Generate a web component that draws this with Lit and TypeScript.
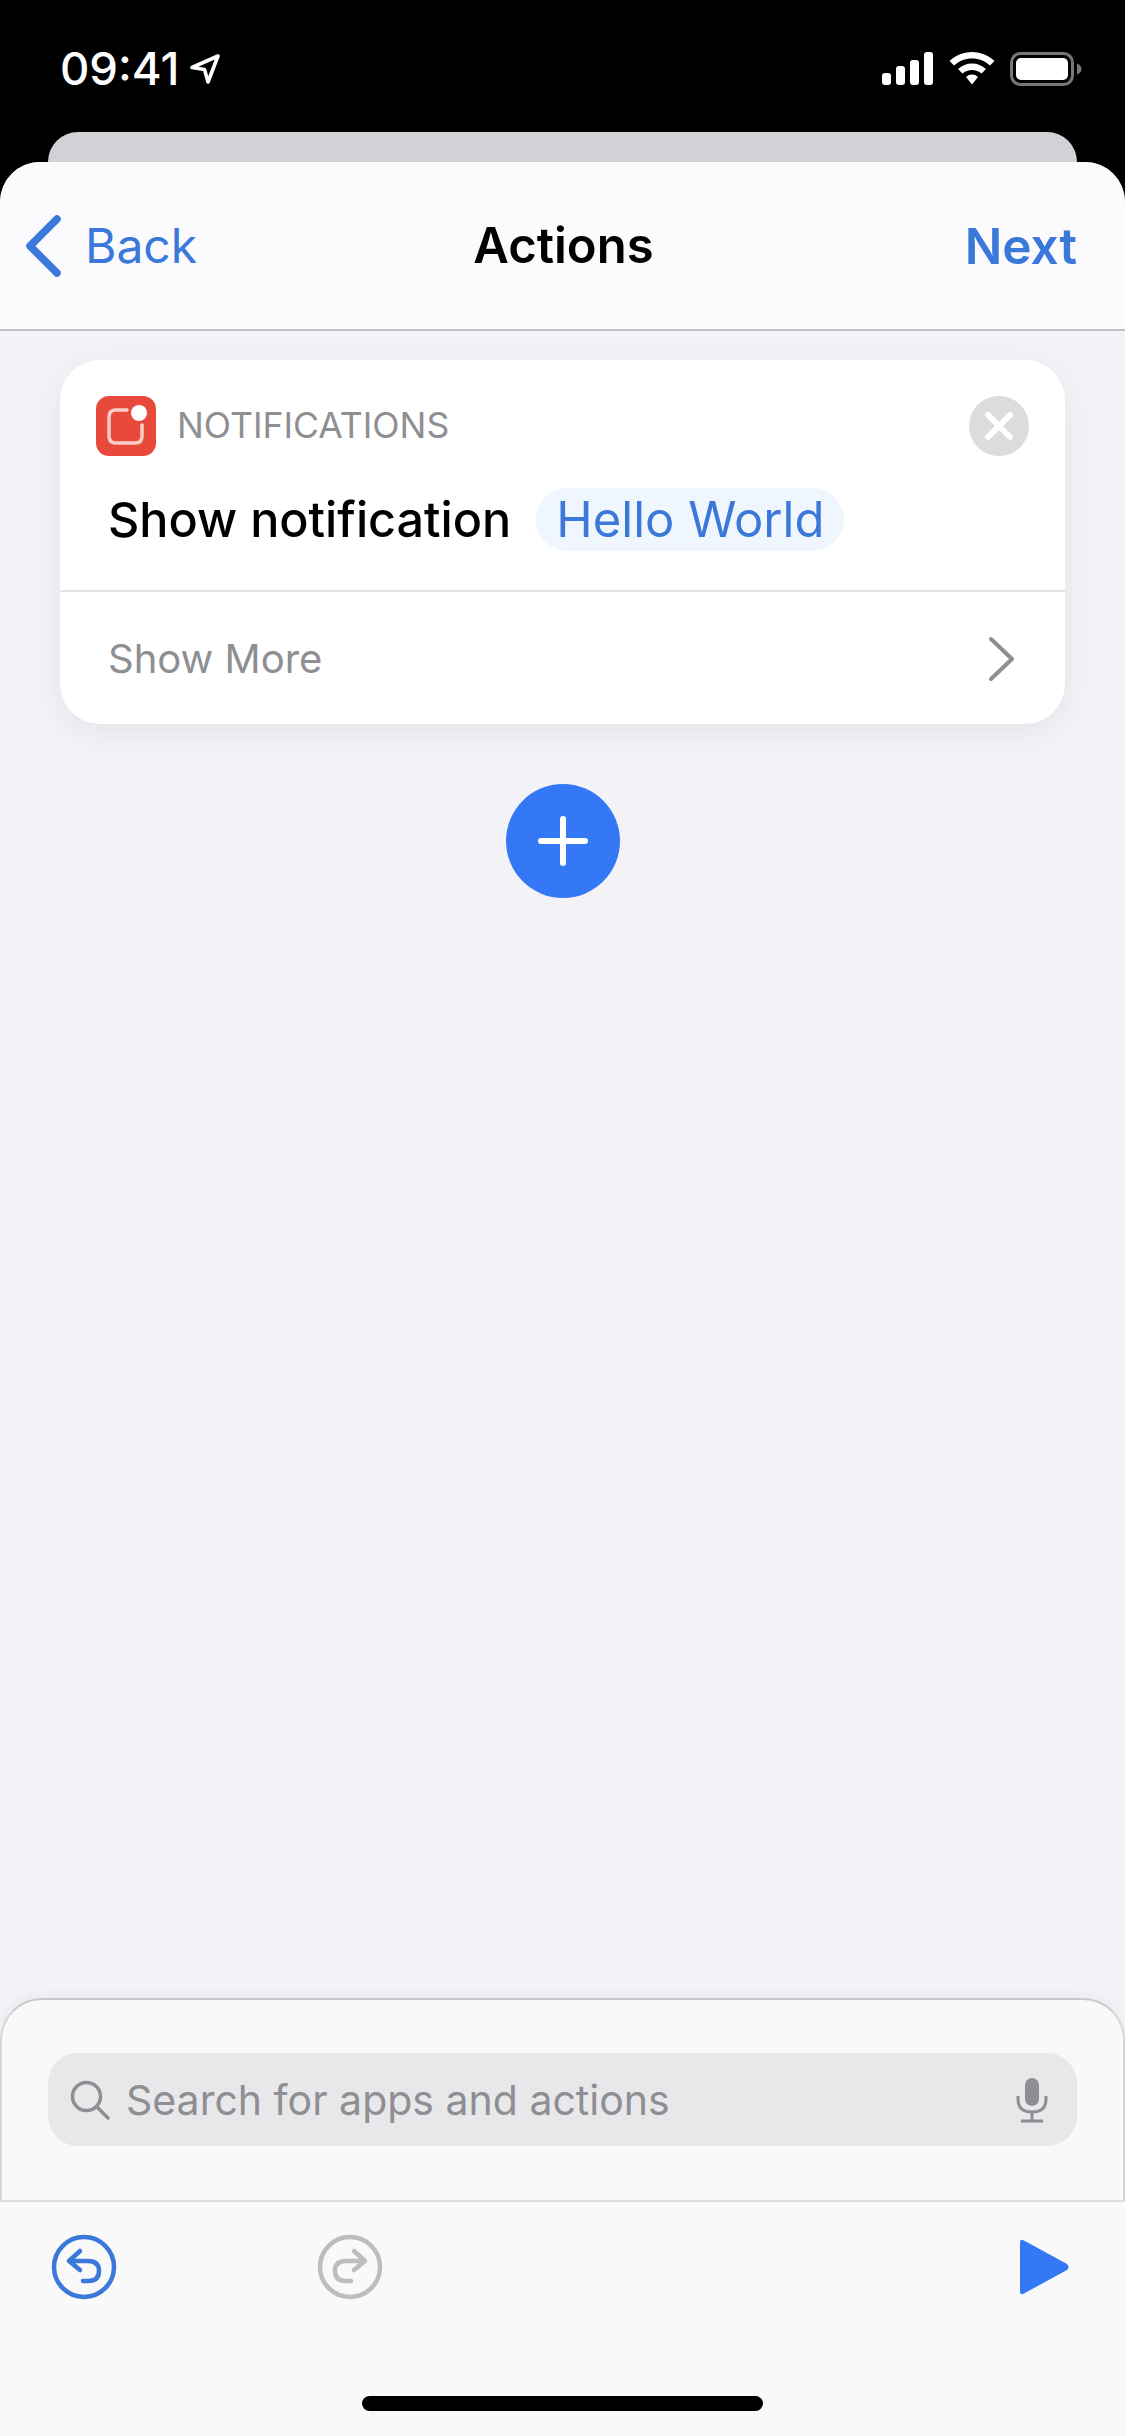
import { LitElement, html, css } from "lit";
import { customElement } from "lit/decorators.js";

@customElement("app-root")
export class AppRoot extends LitElement {
  static styles = css`
    :host { display: flex; flex-direction: column; width: 1125px; height: 2436px; background: #000; font-family: Inter, "Liberation Sans", sans-serif; overflow: hidden; }
    * { box-sizing: border-box; }
    svg { display: block; flex: none; }
    .status { height: 132px; flex: none; display: flex; align-items: flex-start; padding: 52px 43px 0 60px; color: #fff; }
    .time { font-size: 45.5px; line-height: 34px; font-weight: 500; letter-spacing: 0; }
    .arrow { margin: 1px 0 0 10px; }
    .status-right { margin-left: auto; display: flex; align-items: flex-start; gap: 15px; }
    .peek { height: 30px; flex: none; margin: 0 48px; background: #d1d1d6; border-radius: 34px 34px 0 0; }
    .sheet { flex: 1; min-height: 0; display: flex; flex-direction: column; background: #f2f2f7; border-radius: 40px 40px 0 0; overflow: hidden; }
    .nav { height: 169px; flex: none; display: flex; align-items: center; padding: 0 48px 0 26px; background: #fbfbfd; border-bottom: 2px solid #c2c2c6; }
    .back { display: flex; align-items: center; gap: 24px; color: #3a78d9; font-size: 48px; line-height: 60px; }
    .title { flex: 1; text-align: center; font-size: 49px; line-height: 60px; font-weight: 600; color: #000; padding-right: 35px; }
    .next { color: #3a78d9; font-size: 49.5px; line-height: 60px; font-weight: 600; }
    .content { flex: 1; min-height: 0; padding: 29px 60px 0; display: flex; flex-direction: column; align-items: center; }
    .card { width: 1005px; height: 364px; flex: none; background: #fff; border-radius: 40px; box-shadow: 0 8px 30px rgba(60, 60, 80, 0.08); display: flex; flex-direction: column; }
    .card-top { height: 232px; flex: none; padding: 36px 36px 0 36px; border-bottom: 2px solid #e2e2e5; }
    .head { display: flex; align-items: center; height: 60px; }
    .app-icon { width: 60px; height: 60px; border-radius: 13px; background: #e8493b; display: flex; align-items: center; justify-content: center; }
    .cat { margin-left: 21px; font-size: 35.6px; line-height: 40px; color: #8e8e93; }
    .close { margin-left: auto; width: 60px; height: 60px; border-radius: 50%; background: #dcdcde; display: flex; align-items: center; justify-content: center; }
    .line { display: flex; align-items: center; margin: 32px 0 0 12px; }
    .label { font-size: 48.5px; line-height: 63px; font-weight: 500; color: #000; }
    .pill { margin-left: 25px; height: 63px; padding: 0 20px; border-radius: 32px; background: #f0f6fd; color: #3a78d9; font-size: 49px; line-height: 63px; }
    .more { flex: 1; display: flex; align-items: center; padding: 0 49px 0 48px; color: #8e8e93; font-size: 40px; }
    .more svg { margin-left: auto; margin-top: 2px; }
    .add { width: 114px; height: 114px; flex: none; margin-top: 60px; border-radius: 50%; background: #3478f6; display: flex; align-items: center; justify-content: center; }
    .panel { height: 204px; flex: none; padding: 53px 46px 0; background: #f9f9f9; border: 2px solid #c9c9cd; border-bottom-color: #dedee0; border-radius: 42px 42px 0 0; box-shadow: 0 -4px 10px rgba(60, 60, 80, 0.04); border-left-color: #d6d6d9; border-right-color: #d6d6d9; }
    .search { height: 93px; display: flex; align-items: center; padding: 0 29px 0 22px; border-radius: 30px; background: #e8e8ea; color: #8e8e93; font-size: 41px; }
    .search span { margin-left: 16px; }
    .search .mic { margin-left: auto; }
    .toolbar { height: 234px; flex: none; background: #f9f9f9; padding: 32px 53px 0 51px; display: flex; flex-direction: column; }
    .tools { display: flex; align-items: center; gap: 200px; }
    .play { margin-left: auto; margin-right: 2px; }
    .home { width: 401px; height: 15px; margin: 96px 0 0 311px; border-radius: 8px; background: #000; }
  `;

  render() {
    return html`
      <div class="status">
        <div class="time">09:41</div>
        <svg class="arrow" width="32" height="32" viewBox="0 0 32 32" fill="none" stroke="#fff" stroke-width="3.6" stroke-linejoin="round"><path d="M29 3 L3 14.5 L15.5 16.5 L19 29 Z"/></svg>
        <div class="status-right">
          <svg width="52" height="33" viewBox="0 0 52 33" fill="#fff"><rect x="0" y="21" width="9" height="12" rx="3"/><rect x="14" y="14" width="9" height="19" rx="3"/><rect x="28" y="8" width="9" height="25" rx="3"/><rect x="42" y="0" width="9" height="33" rx="3"/></svg>
          <svg width="46" height="33" viewBox="0 0 46 33" fill="#fff"><path d="M23 0C14 0 6.500 3.500 0.500 9L5 13.500C10 9 16 6.500 23 6.500S36 9 41 13.500L45.500 9C39.500 3.500 32 0 23 0Z"/><path d="M23 11.500C17.500 11.500 13 13.500 9 17L13.500 21.500C16 19.300 19.300 18 23 18S30 19.300 32.500 21.500L37 17C33 13.500 28.500 11.500 23 11.500Z"/><path d="M23 22.500C20.500 22.500 18.800 23.300 17 25L23 32.500L29 25C27.200 23.300 25.500 22.500 23 22.500Z"/></svg>
          <svg width="72" height="34" viewBox="0 0 72 34"><rect x="1.500" y="1.500" width="61" height="31" rx="9" fill="none" stroke="#77777a" stroke-width="3"/><rect x="6" y="6" width="52" height="22" rx="5" fill="#fff"/><path d="M67 11.500C70 12.500 71.500 14.500 71.500 17S70 21.500 67 22.500Z" fill="#77777a"/></svg>
        </div>
      </div>
      <div class="peek"></div>
      <div class="sheet">
        <div class="nav">
          <div class="back">
            <svg width="35" height="80" viewBox="0 0 35 80" fill="none" stroke="#3a78d9" stroke-width="7.500" stroke-linecap="round" stroke-linejoin="round"><path d="M31 13 L4 40 L31 67"/></svg>
            <span>Back</span>
          </div>
          <div class="title">Actions</div>
          <div class="next">Next</div>
        </div>
        <div class="content">
          <div class="card">
            <div class="card-top">
              <div class="head">
                <div class="app-icon">
                  <svg width="60" height="60" viewBox="0 0 60 60" fill="none"><path d="M31 14 H20 Q13 14 13 21 V40 Q13 47 20 47 H39 Q46 47 46 40 V29" stroke="#f8cfc6" stroke-width="3.500" stroke-linecap="round"/><circle cx="43" cy="17" r="8" fill="#fff"/></svg>
                </div>
                <div class="cat">NOTIFICATIONS</div>
                <div class="close">
                  <svg width="30" height="30" viewBox="0 0 30 30" stroke="#fff" stroke-width="6" stroke-linecap="round"><path d="M4 4 L26 26 M26 4 L4 26"/></svg>
                </div>
              </div>
              <div class="line">
                <div class="label">Show notification</div>
                <div class="pill">Hello World</div>
              </div>
            </div>
            <div class="more">
              <span>Show More</span>
              <svg width="29" height="46" viewBox="0 0 29 46" fill="none" stroke="#8e8e93" stroke-width="4" stroke-linecap="round" stroke-linejoin="round"><path d="M4 3 L25 23 L4 43"/></svg>
            </div>
          </div>
          <div class="add">
            <svg width="50" height="50" viewBox="0 0 50 50" stroke="#fff" stroke-width="6" stroke-linecap="round"><path d="M25 3 V47 M3 25 H47"/></svg>
          </div>
        </div>
        <div class="panel">
          <div class="search">
            <svg width="40" height="40" viewBox="0 0 40 40" fill="none" stroke="#8e8e93" stroke-width="3.500" stroke-linecap="round"><circle cx="16.500" cy="16.500" r="14"/><path d="M27 27 L38 38"/></svg>
            <span>Search for apps and actions</span>
            <svg class="mic" width="32" height="46" viewBox="0 0 32 46" fill="none" stroke="#8e8e93" stroke-width="3"><rect x="9" y="1" width="14" height="28" rx="7" fill="#8e8e93" stroke="none"/><path d="M2 19 V22 Q2 35 16 35 T30 22 V19 M16 35 V43 M5 44 H27" /></svg>
          </div>
        </div>
        <div class="toolbar">
          <div class="tools">
            <svg width="66" height="66" viewBox="0 0 66 66" fill="none" stroke="#3a78d9" stroke-width="4.500" stroke-linecap="round" stroke-linejoin="round"><circle cx="33" cy="33" r="30"/><path d="M29 17 L18 27 L29 36 M18 27 H37 Q48 27 48 37 Q48 47 37 47 H32"/></svg>
            <svg width="66" height="66" viewBox="0 0 66 66" fill="none" stroke="#bdbdbd" stroke-width="4.500" stroke-linecap="round" stroke-linejoin="round"><circle cx="33" cy="33" r="30"/><path d="M37 17 L48 27 L37 36 M48 27 H29 Q18 27 18 37 Q18 47 29 47 H34"/></svg>
            <svg class="play" width="50" height="56" viewBox="0 0 50 56" fill="#3478f6"><path d="M0 4 Q0 -1 4 1.500 L47 25 Q50 28 47 31 L4 54.500 Q0 57 0 52 Z"/></svg>
          </div>
          <div class="home"></div>
        </div>
      </div>
    `;
  }
}
